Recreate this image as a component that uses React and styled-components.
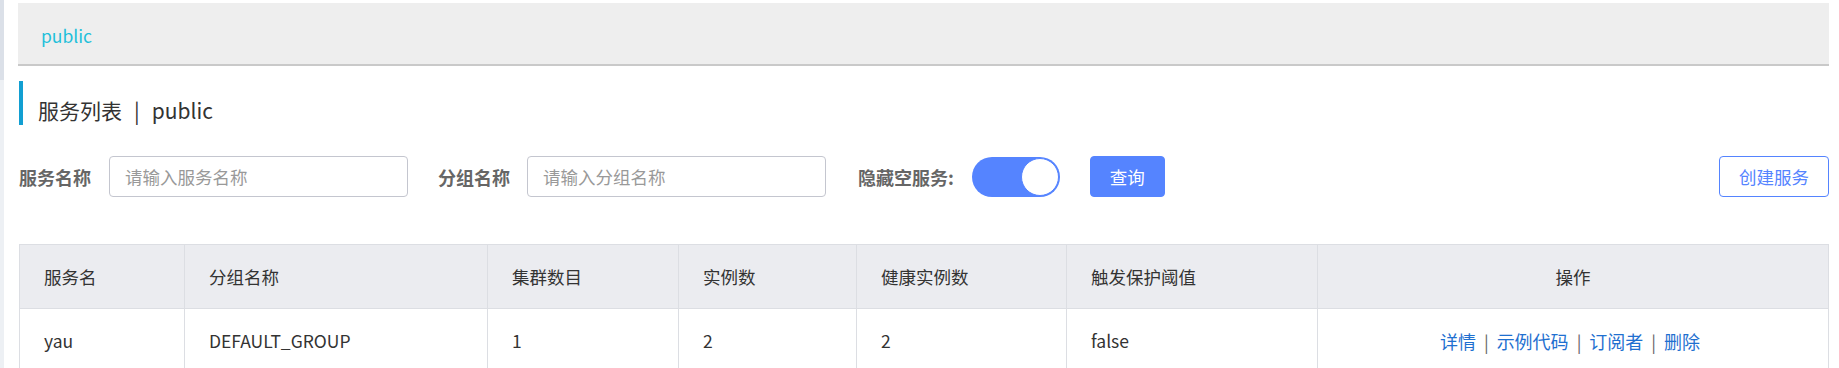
import React from "react";
import styled, { createGlobalStyle } from "styled-components";

const Global = createGlobalStyle`
  html, body { margin: 0; padding: 0; background: #fff; }
  body {
    font-family: "Noto Sans CJK SC", "Noto Sans", sans-serif;
    color: #333;
    overflow: hidden;
  }
  * { box-sizing: border-box; }
`;

const Page = styled.div`
  display: flex;
  width: 1839px;
  min-height: 368px;
`;

const SideStrip = styled.div`
  width: 4px;
  flex: none;
  background: linear-gradient(to bottom, #dbe0e8 0, #dbe0e8 80px, #edf0f4 80px, #edf0f4 100%);
`;

const Main = styled.div`
  flex: 1;
  padding: 3px 10px 0 14px;
  display: flex;
  flex-direction: column;
`;

const TopBar = styled.div`
  height: 63px;
  background: #eeeeee;
  border-bottom: 2px solid #c9c9c9;
  display: flex;
  align-items: center;
  padding: 4px 0 0 23px;
  font-size: 17.5px;
  color: #1fc0da;
`;

const Title = styled.h2`
  margin: 15px 0 0 1px;
  height: 44px;
  border-left: 4px solid #129fd2;
  padding: 13px 0 0 15px;
  display: flex;
  align-items: center;
  font-size: 21px;
  font-weight: 400;
  color: #333;
`;

const Sep = styled.span`
  margin: 0 12px;
`;

const FormRow = styled.div`
  margin: 31px 0 0 1px;
  display: flex;
  align-items: center;
  height: 41px;
`;

const Label = styled.label`
  font-size: 18px;
  font-weight: 700;
  color: #666;
  margin-right: ${(p) => p.$gap || 18}px;
  white-space: nowrap;
`;

const Input = styled.input`
  width: 299px;
  height: 41px;
  border: 1px solid #c4c6cf;
  border-radius: 4px;
  padding: 0 15px;
  font-size: 17.5px;
  font-family: inherit;
  color: #333;
  margin-right: ${(p) => p.$gap || 30}px;
  outline: none;
  &::placeholder { color: #999; }
`;

const Toggle = styled.div`
  width: 88px;
  height: 40px;
  border-radius: 20px;
  background: #5584ff;
  display: flex;
  align-items: center;
  justify-content: flex-end;
  padding: 1px;
  margin-right: 30px;
`;

const Knob = styled.div`
  width: 38px;
  height: 38px;
  border-radius: 50%;
  background: #fff;
  border: 1px solid #5584ff;
`;

const Button = styled.button`
  height: 41px;
  padding: 0 19px;
  border-radius: 4px;
  font-size: 17.5px;
  font-family: inherit;
  border: 1px solid #5584ff;
  background: ${(p) => (p.$outline ? "#fff" : "#5584ff")};
  color: ${(p) => (p.$outline ? "#5584ff" : "#fff")};
  cursor: pointer;
`;

const Spacer = styled.div`
  flex: 1;
`;

const Table = styled.table`
  margin: 47px 0 0 1px;
  width: calc(100% - 1px);
  border-collapse: collapse;
  table-layout: fixed;
  border: 1px solid #dcdee3;
  font-size: 17.5px;
`;

const Th = styled.th`
  height: 64px;
  background: #ebecf0;
  border: 1px solid #dcdee3;
  font-weight: 400;
  color: #333;
  text-align: ${(p) => (p.$center ? "center" : "left")};
  padding: 0 24px;
`;

const Td = styled.td`
  height: 64px;
  border: 1px solid #dcdee3;
  color: #333;
  text-align: ${(p) => (p.$center ? "center" : "left")};
  padding: 0 ${(p) => (p.$center ? 30 : 24)}px 0 24px;
`;

const Link = styled.a`
  color: #1f70d0;
  text-decoration: none;
  font-size: 18px;
  cursor: pointer;
`;

const Pipe = styled.span`
  color: #666;
  margin: 0 8px;
`;

const columns = [
  { title: "服务名", width: 165 },
  { title: "分组名称", width: 303 },
  { title: "集群数目", width: 191 },
  { title: "实例数", width: 178 },
  { title: "健康实例数", width: 210 },
  { title: "触发保护阈值", width: 251 },
  { title: "操作", center: true },
];

const row = ["yau", "DEFAULT_GROUP", "1", "2", "2", "false"];
const actions = ["详情", "示例代码", "订阅者", "删除"];

export default function App() {
  return (
    <>
      <Global />
      <Page>
        <SideStrip />
        <Main>
          <TopBar>public</TopBar>
          <Title>
            服务列表<Sep>|</Sep>public
          </Title>
          <FormRow>
            <Label $gap={18}>服务名称</Label>
            <Input placeholder="请输入服务名称" />
            <Label $gap={17}>分组名称</Label>
            <Input $gap={32} placeholder="请输入分组名称" />
            <Label $gap={18}>隐藏空服务:</Label>
            <Toggle>
              <Knob />
            </Toggle>
            <Button>查询</Button>
            <Spacer />
            <Button $outline>创建服务</Button>
          </FormRow>
          <Table>
            <colgroup>
              {columns.map((c, i) => (
                <col key={i} style={c.width ? { width: c.width } : undefined} />
              ))}
            </colgroup>
            <thead>
              <tr>
                {columns.map((c, i) => (
                  <Th key={i} $center={c.center}>
                    {c.title}
                  </Th>
                ))}
              </tr>
            </thead>
            <tbody>
              <tr>
                {row.map((v, i) => (
                  <Td key={i}>{v}</Td>
                ))}
                <Td $center>
                  {actions.map((a, i) => (
                    <React.Fragment key={a}>
                      {i > 0 && <Pipe>|</Pipe>}
                      <Link>{a}</Link>
                    </React.Fragment>
                  ))}
                </Td>
              </tr>
            </tbody>
          </Table>
        </Main>
      </Page>
    </>
  );
}
